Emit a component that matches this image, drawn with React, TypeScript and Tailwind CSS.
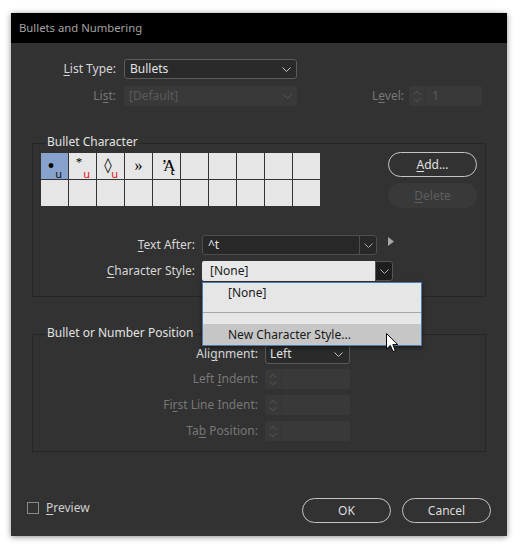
import type { ReactNode } from 'react';

function Chevron({ color = '#b8b8b8' }: { color?: string }) {
  return (
    <svg width="9" height="5" viewBox="0 0 9 5">
      <path d="M0.5 0.5 L4.5 4.5 L8.5 0.5" fill="none" stroke={color} strokeWidth="1" />
    </svg>
  );
}

function U({ children }: { children: ReactNode }) {
  return <span className="underline underline-offset-2 decoration-1">{children}</span>;
}

function Spinner({ width, value }: { width: string; value?: string }) {
  return (
    <div className={`${width} flex h-[20px] items-center rounded-[2px] bg-[#393939]`}>
      <div className="flex h-full w-[17px] flex-col items-center justify-center gap-[3px] border-r border-[#333]">
        <svg width="8" height="4" viewBox="0 0 8 4">
          <path d="M0.5 3.5 L4 0.5 L7.5 3.5" fill="none" stroke="#555" strokeWidth="1" />
        </svg>
        <svg width="8" height="4" viewBox="0 0 8 4">
          <path d="M0.5 0.5 L4 3.5 L7.5 0.5" fill="none" stroke="#555" strokeWidth="1" />
        </svg>
      </div>
      {value && <span className="pl-[6px] text-[#5c5c5c]">{value}</span>}
    </div>
  );
}

function Cell({ children, selected }: { children?: ReactNode; selected?: boolean }) {
  return (
    <div className={`relative flex h-[26px] w-[27px] items-center justify-center ${selected ? 'bg-[#87a3cd]' : 'bg-[#e6e6e6]'}`}>
      {children}
    </div>
  );
}

function Sub({ red }: { red?: boolean }) {
  return (
    <span className={`absolute bottom-[0px] right-[6px] text-[11px] leading-[11px] font-['Noto_Sans',sans-serif] ${red ? 'text-[#e0161b]' : 'text-[#111]'}`}>
      u
    </span>
  );
}

export default function App() {
  return (
    <div className="h-[549px] w-[525px] bg-white pl-[11px] pt-[13px] font-['Noto_Sans','Open_Sans',sans-serif] text-[12px] leading-[16px]">
      <div className="flex h-[523px] w-[496px] flex-col bg-[#323232] shadow-[0_1px_6px_rgba(0,0,0,0.45)]">
        <div className="flex h-[30px] items-center bg-black pl-[8px] text-[11.3px] text-[#a3a3a3]">Bullets and Numbering</div>

        <div className="flex flex-1 flex-col pt-[16px]">
          {/* List Type */}
          <div className="flex h-[20px] items-center">
            <div className="w-[105px] text-right text-[#d6d6d6]">
              <U>L</U>ist Type:
            </div>
            <div className="ml-[8px] flex h-[20px] w-[173px] items-center justify-between rounded-[3px] border border-[#5c5c5c] bg-[#2a2a2a] pl-[5px] pr-[5px] text-[#e4e4e4]">
              <span>Bullets</span>
              <Chevron color="#c8c8c8" />
            </div>
          </div>

          {/* List / Level */}
          <div className="mt-[7px] flex h-[20px] items-center">
            <div className="w-[105px] text-right text-[#777]">
              Li<U>s</U>t:
            </div>
            <div className="ml-[8px] flex h-[20px] w-[173px] items-center justify-between rounded-[2px] bg-[#393939] pl-[5px] pr-[5px] text-[#5a5a5a]">
              <span>[Default]</span>
              <Chevron color="#555" />
            </div>
            <div className="ml-auto mr-[25px] flex items-center">
              <span className="text-[#777]">
                L<U>e</U>vel:
              </span>
              <div className="ml-[5px]">
                <Spinner width="w-[73px]" value="1" />
              </div>
            </div>
          </div>

          {/* Bullet Character group */}
          <div className="ml-[21px] mt-[37px] flex h-[154px] w-[454px] flex-col border border-[#262626]">
            <div className="-mt-[10px] ml-[13px] w-fit bg-[#323232] px-[1px] text-[#e2e2e2]">Bullet Character</div>
            <div className="flex items-start">
              <div className="ml-[8px] mt-[3px] grid grid-cols-[repeat(10,27px)] gap-[1px] bg-[#333]">
                <Cell selected>
                  <span className="-ml-[7px] -mt-[1px] font-['Liberation_Serif',serif] text-[20px] leading-[20px] text-black">•</span>
                  <Sub />
                </Cell>
                <Cell>
                  <span className="-ml-[7px] -mt-[8px] font-['Liberation_Serif',serif] text-[13px] text-black">*</span>
                  <Sub red />
                </Cell>
                <Cell>
                  <span className="-ml-[5px] -mt-[3px] font-['DejaVu_Sans',sans-serif] text-[15px] text-black">◊</span>
                  <Sub red />
                </Cell>
                <Cell>
                  <span className="-mt-[1px] font-['Liberation_Serif',serif] text-[16px] text-black">»</span>
                </Cell>
                <Cell>
                  <span className="-mt-[1px] font-['Liberation_Serif',serif] text-[17px] leading-[17px] tracking-[-4px] text-black">
                    ʼĄ
                  </span>
                </Cell>
                {Array.from({ length: 15 }).map((_, i) => (
                  <Cell key={i} />
                ))}
              </div>
              <div className="ml-auto mr-[8px] mt-[2px] flex flex-col gap-[6px]">
                <div className="flex h-[25px] w-[89px] items-center justify-center rounded-full border-[1.5px] border-[#c4c4c4] text-[#e0e0e0]">
                  <U>A</U>dd...
                </div>
                <div className="flex h-[25px] w-[89px] items-center justify-center rounded-full bg-[#393939] text-[#5e5e5e]">
                  <U>D</U>elete
                </div>
              </div>
            </div>

            {/* Text After */}
            <div className="mt-[27px] flex h-[20px] items-center">
              <div className="w-[162px] text-right text-[#d6d6d6]">
                <U>T</U>ext After:
              </div>
              <div className="ml-[7px] flex h-[20px] w-[175px] items-center rounded-[3px] border border-[#4e4e4e] bg-[#282828] text-[#e4e4e4]">
                <span className="flex-1 pl-[5px]">^t</span>
                <div className="flex h-full w-[17px] items-center justify-center border-l border-[#4e4e4e]">
                  <Chevron color="#a8a8a8" />
                </div>
              </div>
              <svg className="ml-[11px] -mt-[8px]" width="6" height="9" viewBox="0 0 6 9">
                <path d="M0 0 L6 4.5 L0 9 Z" fill="#a8a8a8" />
              </svg>
            </div>

            {/* Character Style */}
            <div className="mt-[6px] flex h-[20px] items-center">
              <div className="w-[162px] text-right text-[#d6d6d6]">
                <U>C</U>haracter Style:
              </div>
              <div className="relative ml-[7px] flex h-[20px] w-[191px] items-stretch">
                <div className="flex flex-1 items-center rounded-l-[2px] bg-[#e8e8e8] pl-[8px] text-[#1a1a1a]">[None]</div>
                <div className="flex w-[18px] items-center justify-center rounded-r-[3px] border border-[#555] bg-[#1e1e1e]">
                  <Chevron color="#b0b0b0" />
                </div>

                {/* open menu */}
                <div className="absolute left-0 top-[21px] z-10 w-[220px] border border-[#4b7bb3] bg-[#e6e6e6] text-[#1a1a1a] shadow-[0_2px_4px_rgba(0,0,0,0.45)]">
                  <div className="flex h-[20px] items-center pl-[25px]">[None]</div>
                  <div className="h-[9px]" />
                  <div className="h-[1px] bg-[#a6a6a6]" />
                  <div className="h-[11px]" />
                  <div className="relative flex h-[21px] items-center bg-[#c6c6c6] pl-[25px]">
                    New Character Style...
                    <svg className="absolute left-[183px] top-[9px]" width="13" height="20" viewBox="0 0 13 20">
                      <path d="M0.5 0.5 L0.5 16 L4.3 12.4 L7 18.6 L9.4 17.6 L6.8 11.6 L11.8 11.6 Z" fill="white" stroke="black" strokeWidth="1" strokeLinejoin="round" />
                    </svg>
                  </div>
                </div>
              </div>
            </div>
          </div>

          {/* Bullet or Number Position group */}
          <div className="ml-[21px] mt-[37px] flex h-[118px] w-[454px] flex-col border border-[#262626]">
            <div className="-mt-[10px] ml-[13px] w-fit bg-[#323232] px-[1px] text-[#e2e2e2]">Bullet or Number Position</div>
            <div className="mt-[3px] flex h-[20px] items-center">
              <div className="w-[225px] text-right text-[#d6d6d6]">
                Ali<U>g</U>nment:
              </div>
              <div className="ml-[7px] flex h-[20px] w-[85px] items-center justify-between rounded-[3px] border border-[#5a5a5a] bg-[#2a2a2a] pl-[4px] pr-[6px] text-[#e4e4e4]">
                <span>Left</span>
                <Chevron color="#c0c0c0" />
              </div>
            </div>
            <div className="mt-[5px] flex h-[20px] items-center">
              <div className="w-[225px] text-right text-[#777]">
                Left <U>I</U>ndent:
              </div>
              <div className="ml-[7px]">
                <Spinner width="w-[85px]" />
              </div>
            </div>
            <div className="mt-[6px] flex h-[20px] items-center">
              <div className="w-[225px] text-right text-[#777]">
                Fi<U>r</U>st Line Indent:
              </div>
              <div className="ml-[7px]">
                <Spinner width="w-[85px]" />
              </div>
            </div>
            <div className="mt-[6px] flex h-[20px] items-center">
              <div className="w-[225px] text-right text-[#777]">
                Ta<U>b</U> Position:
              </div>
              <div className="ml-[7px]">
                <Spinner width="w-[85px]" />
              </div>
            </div>
          </div>

          {/* Footer */}
          <div className="mt-[46px] flex h-[25px] items-center pl-[16px] pr-[16px]">
            <div className="-mt-[6px] h-[12px] w-[12px] border border-[#8a8a8a]" />
            <span className="ml-[7px] -mt-[6px] text-[#cfcfcf]">
              <U>P</U>review
            </span>
            <div className="ml-auto flex gap-[11px]">
              <div className="flex h-[25px] w-[89px] items-center justify-center rounded-full border-[1.5px] border-[#c4c4c4] text-[#dcdcdc]">OK</div>
              <div className="flex h-[25px] w-[89px] items-center justify-center rounded-full border-[1.5px] border-[#c4c4c4] text-[#dcdcdc]">Cancel</div>
            </div>
          </div>
        </div>
      </div>
    </div>
  );
}
